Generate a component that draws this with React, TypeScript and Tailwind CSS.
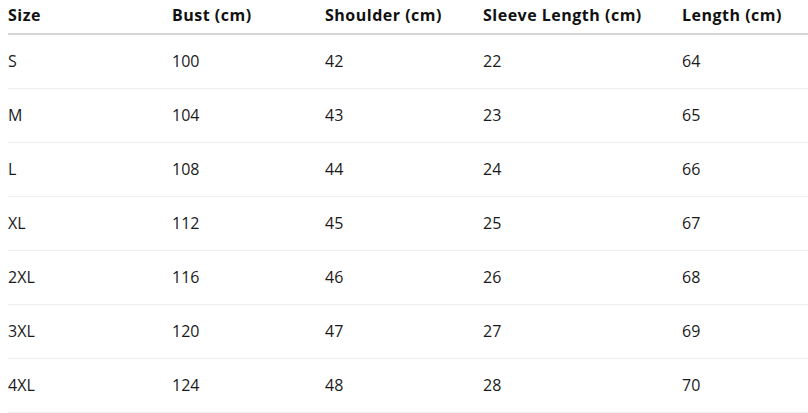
import React from 'react';

const rows = [
  ['S', '100', '42', '22', '64'],
  ['M', '104', '43', '23', '65'],
  ['L', '108', '44', '24', '66'],
  ['XL', '112', '45', '25', '67'],
  ['2XL', '116', '46', '26', '68'],
  ['3XL', '120', '47', '27', '69'],
  ['4XL', '124', '48', '28', '70'],
];

const headers = ['Size', 'Bust (cm)', 'Shoulder (cm)', 'Sleeve Length (cm)', 'Length (cm)'];
const widths = ['w-[164px]', 'w-[153px]', 'w-[158px]', 'w-[199px]', 'w-[126px]'];

export default function App() {
  return (
    <div className="bg-white pl-2 font-['Open_Sans',sans-serif] text-[16px]">
      <table className="w-[800px] table-fixed border-collapse text-left">
        <thead>
          <tr className="h-[34px] border-b-2 border-[#d6d6d6]">
            {headers.map((h, i) => (
              <th key={h} className={`${widths[i]} pb-1 align-middle font-bold tracking-[0.5px] text-[#111]`}>
                {h}
              </th>
            ))}
          </tr>
        </thead>
        <tbody>
          {rows.map((r) => (
            <tr key={r[0]} className="h-[54px] border-b border-[#eeeeee]">
              {r.map((c, i) => (
                <td key={i} className="align-middle text-[#1a1a1a]">
                  {c}
                </td>
              ))}
            </tr>
          ))}
        </tbody>
      </table>
    </div>
  );
}
